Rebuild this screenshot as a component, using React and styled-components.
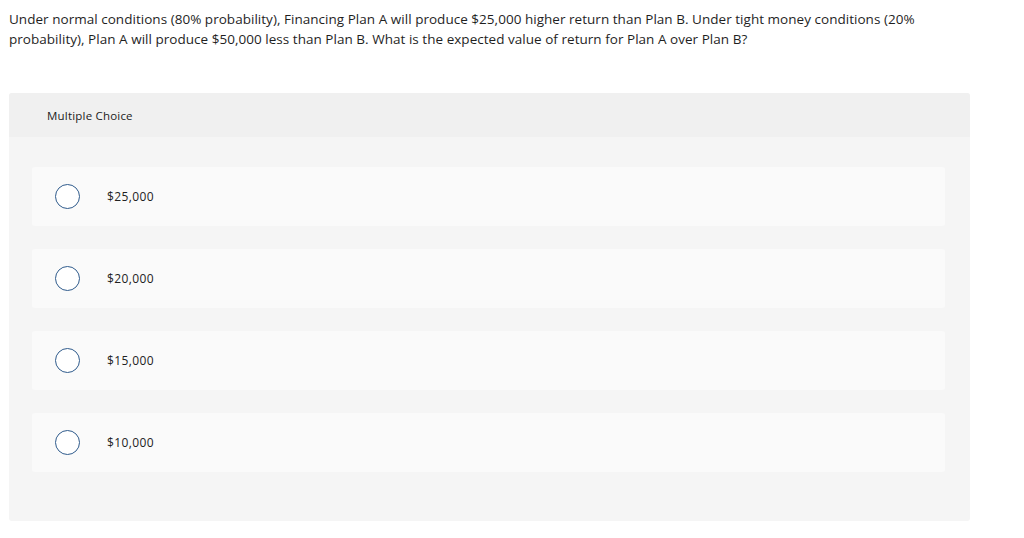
import React from "react";
import styled, { createGlobalStyle } from "styled-components";

const GlobalStyle = createGlobalStyle`
  body {
    margin: 0;
    background: #ffffff;
    font-family: "Open Sans", "Liberation Sans", Arial, sans-serif;
    color: #1a1a1a;
  }
`;

const Page = styled.div`
  width: 1024px;
  height: 538px;
  padding: 9px 54px 0 9px;
  box-sizing: border-box;
`;

const Question = styled.p`
  margin: 0;
  font-size: 13.5px;
  line-height: 20px;
  letter-spacing: 0.03px;
  color: #1f1f1f;
`;

const Panel = styled.section`
  margin-top: 44px;
  background: #f5f5f5;
  border-radius: 3px;
  overflow: hidden;
`;

const Header = styled.div`
  height: 44px;
  background: #f0f0f0;
  display: flex;
  align-items: center;
  padding-left: 38px;
  font-size: 11.5px;
  letter-spacing: 0.2px;
  color: #222;
`;

const Options = styled.div`
  display: flex;
  flex-direction: column;
  gap: 23px;
  padding: 30px 25px 49px 23px;
`;

const Option = styled.label`
  height: 59px;
  background: #fafafa;
  border-radius: 3px;
  display: flex;
  align-items: center;
  padding-left: 23px;
  font-size: 12px;
  letter-spacing: 0.4px;
  color: #222;
  cursor: pointer;
`;

const Radio = styled.span`
  width: 23px;
  height: 23px;
  border: 1px solid #2f5b8c;
  border-radius: 50%;
  background: #fff;
  margin-right: 27px;
  flex-shrink: 0;
`;

const choices = ["$25,000", "$20,000", "$15,000", "$10,000"];

export default function App() {
  return (
    <>
      <GlobalStyle />
      <Page>
        <Question>
          Under normal conditions (80% probability), Financing Plan A will produce $25,000 higher return than Plan B. Under tight money conditions (20% probability), Plan A will produce $50,000 less than Plan B. What is the expected value of return for Plan A over Plan B?
        </Question>
        <Panel>
          <Header>Multiple Choice</Header>
          <Options>
            {choices.map((c) => (
              <Option key={c}>
                <Radio />
                {c}
              </Option>
            ))}
          </Options>
        </Panel>
      </Page>
    </>
  );
}
